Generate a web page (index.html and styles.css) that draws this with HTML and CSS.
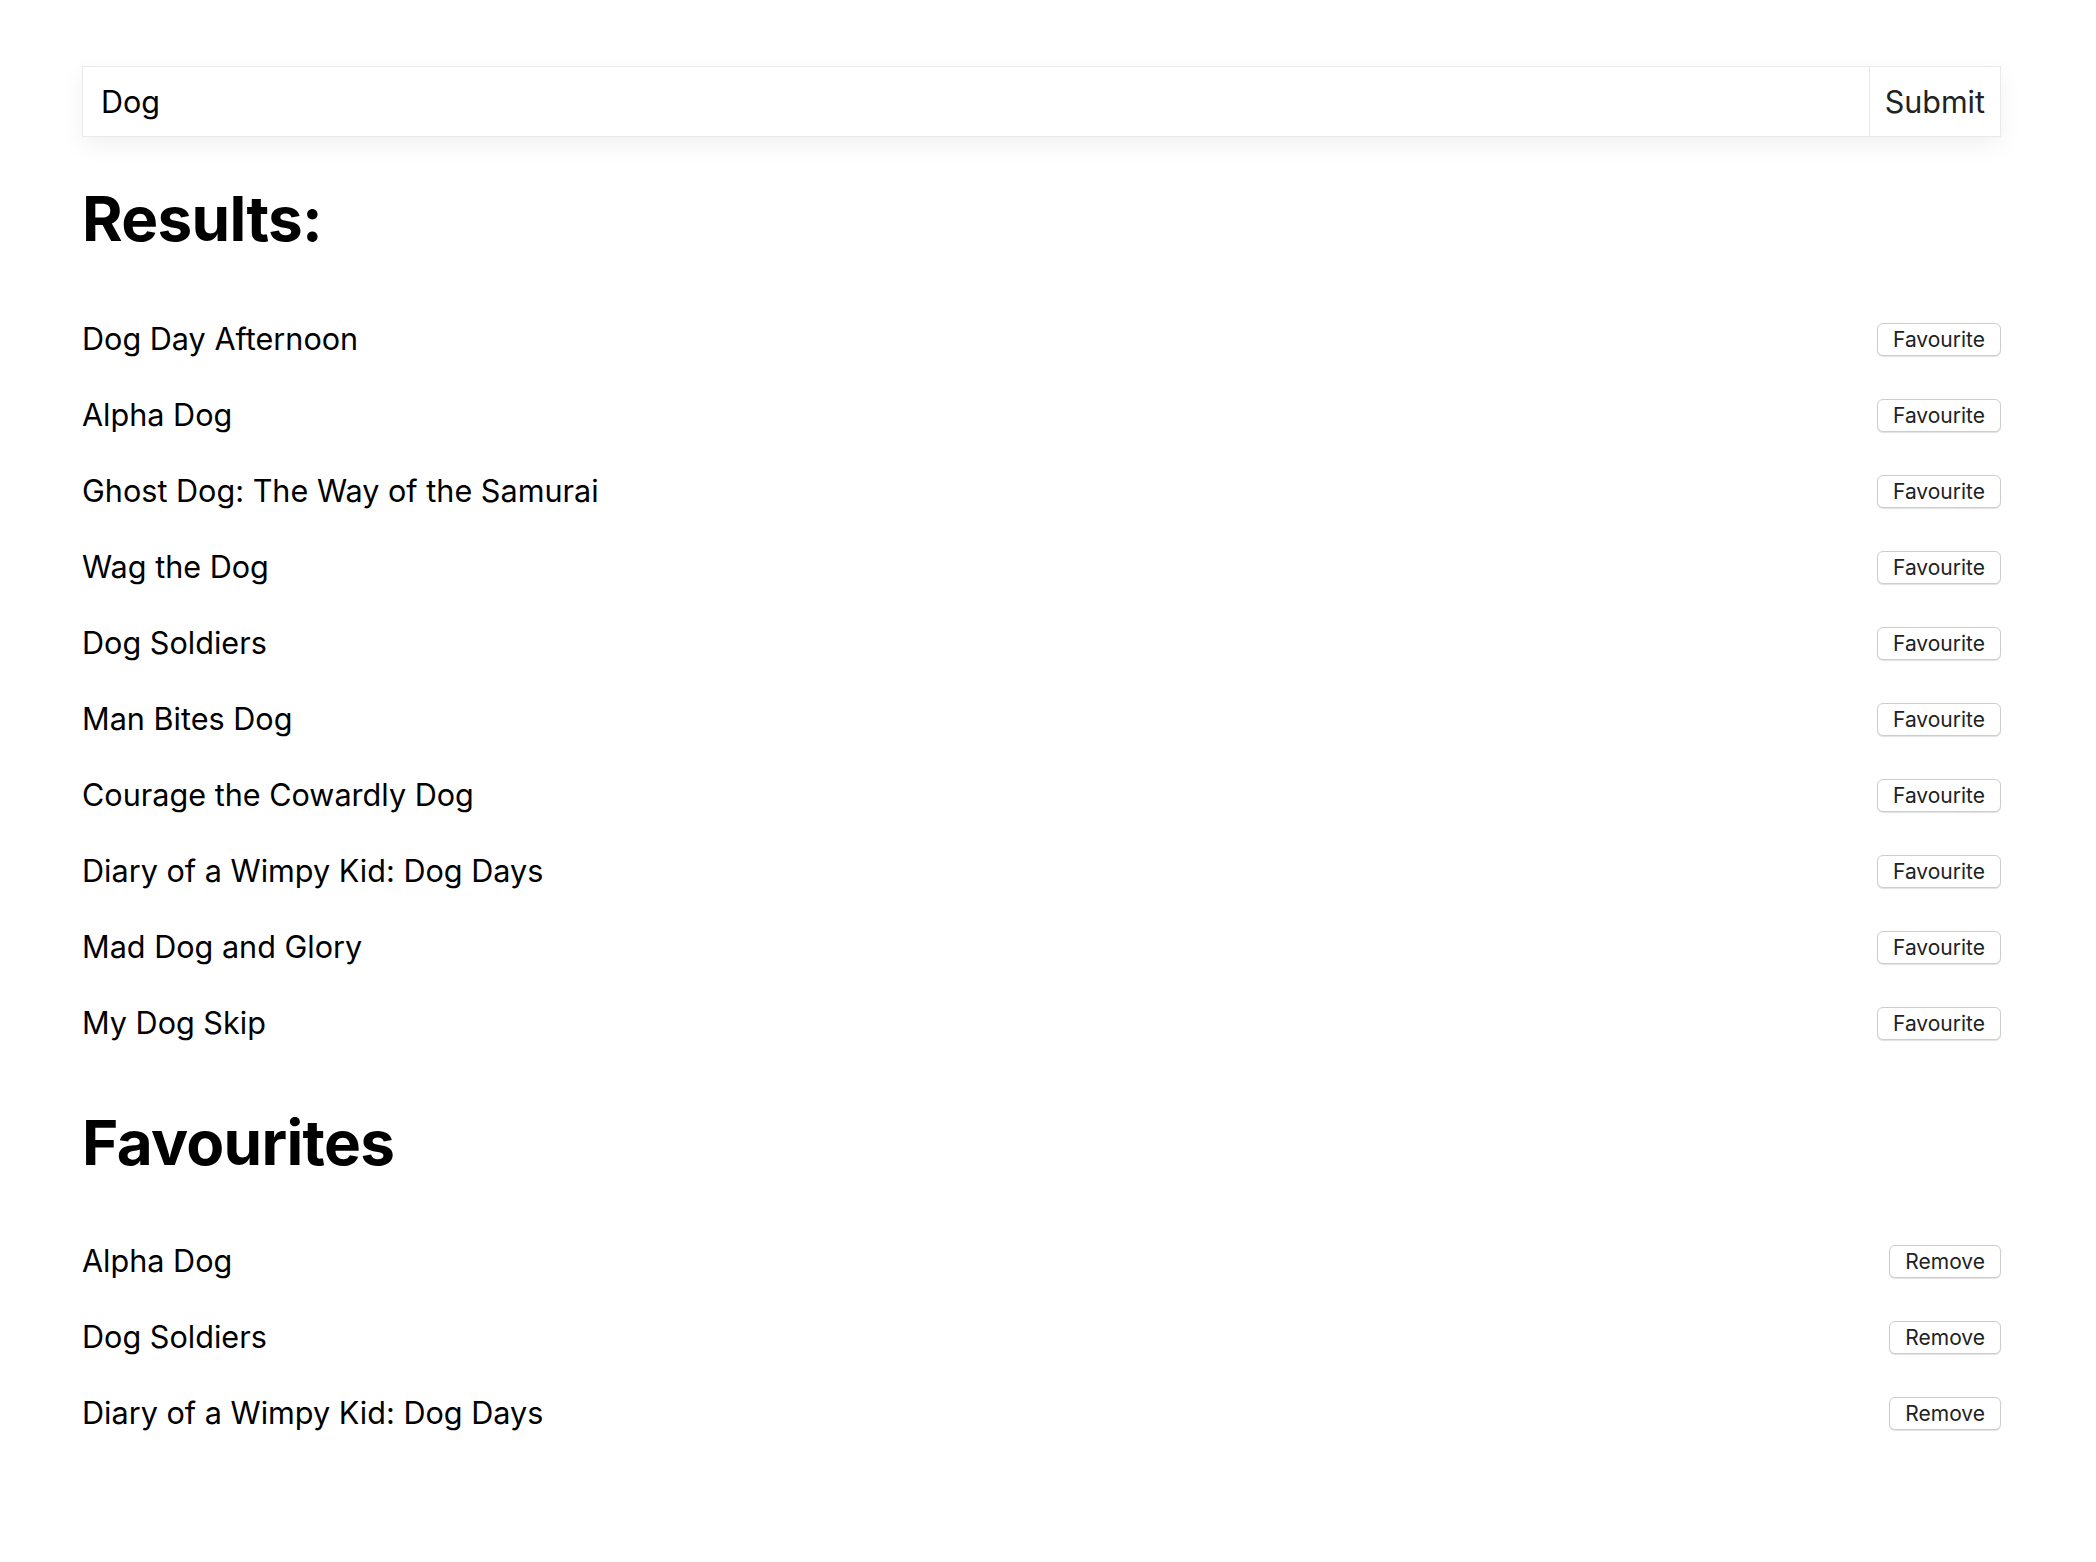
FILE: index.html
```html
<!DOCTYPE html>
<html lang="en">
<head>
<meta charset="utf-8">
<title>Search</title>
<link rel="stylesheet" href="styles.css">
</head>
<body>
<main class="page">
  <form class="search">
    <input class="search-input" type="text" value="Dog">
    <button class="search-btn" type="button">Submit</button>
  </form>

  <h1 class="heading heading-results">Results:</h1>
  <ul class="list">
    <li class="row"><span class="title">Dog Day Afternoon</span><button class="small-btn" type="button">Favourite</button></li>
    <li class="row"><span class="title">Alpha Dog</span><button class="small-btn" type="button">Favourite</button></li>
    <li class="row"><span class="title">Ghost Dog: The Way of the Samurai</span><button class="small-btn" type="button">Favourite</button></li>
    <li class="row"><span class="title">Wag the Dog</span><button class="small-btn" type="button">Favourite</button></li>
    <li class="row"><span class="title">Dog Soldiers</span><button class="small-btn" type="button">Favourite</button></li>
    <li class="row"><span class="title">Man Bites Dog</span><button class="small-btn" type="button">Favourite</button></li>
    <li class="row"><span class="title">Courage the Cowardly Dog</span><button class="small-btn" type="button">Favourite</button></li>
    <li class="row"><span class="title">Diary of a Wimpy Kid: Dog Days</span><button class="small-btn" type="button">Favourite</button></li>
    <li class="row"><span class="title">Mad Dog and Glory</span><button class="small-btn" type="button">Favourite</button></li>
    <li class="row"><span class="title">My Dog Skip</span><button class="small-btn" type="button">Favourite</button></li>
  </ul>

  <h1 class="heading heading-favs">Favourites</h1>
  <ul class="list list-favs">
    <li class="row"><span class="title">Alpha Dog</span><button class="small-btn" type="button">Remove</button></li>
    <li class="row"><span class="title">Dog Soldiers</span><button class="small-btn" type="button">Remove</button></li>
    <li class="row"><span class="title">Diary of a Wimpy Kid: Dog Days</span><button class="small-btn" type="button">Remove</button></li>
  </ul>
</main>
</body>
</html>
```

FILE: styles.css
```css
* {
  box-sizing: border-box;
}

html, body {
  margin: 0;
  background: #ffffff;
}

body {
  font-family: Inter, "Noto Sans", "Liberation Sans", sans-serif;
  color: #000;
}

.page {
  padding: 66px 95px 0 82px;
}

.search {
  display: flex;
  height: 71px;
  border: 1px solid #e9e9e9;
  background: #fff;
  box-shadow: 0 8px 24px rgba(0, 0, 0, 0.06);
  margin: 0;
}

.search-input {
  flex: 1;
  min-width: 0;
  border: none;
  outline: none;
  padding: 0 18px;
  font-family: inherit;
  font-size: 30.5px;
  color: #000;
  background: transparent;
}

.search-btn {
  border: none;
  border-left: 1px solid #e9e9e9;
  background: #fff;
  padding: 0 15px;
  font-family: inherit;
  font-size: 30.5px;
  color: #222;
}

.heading {
  font-size: 62px;
  font-weight: 700;
  line-height: 1;
  letter-spacing: -0.7px;
  margin: 0;
}

.heading-results {
  margin-top: 51px;
}

.heading-favs {
  margin-top: 51px;
}

.list {
  list-style: none;
  margin: 51px 0 0;
  padding: 0;
}

.list-favs {
  margin-top: 49px;
}

.row {
  display: flex;
  justify-content: space-between;
  align-items: center;
  height: 76px;
}

.title {
  font-size: 30.6px;
  line-height: 1;
}

.small-btn {
  height: 33px;
  padding: 0 15px;
  border: 1px solid #cdcdcd;
  border-radius: 6px;
  background: #fff;
  box-shadow: 0 1px 1px rgba(0, 0, 0, 0.12);
  font-family: inherit;
  font-size: 21px;
  color: #222;
  line-height: 1;
}
```
